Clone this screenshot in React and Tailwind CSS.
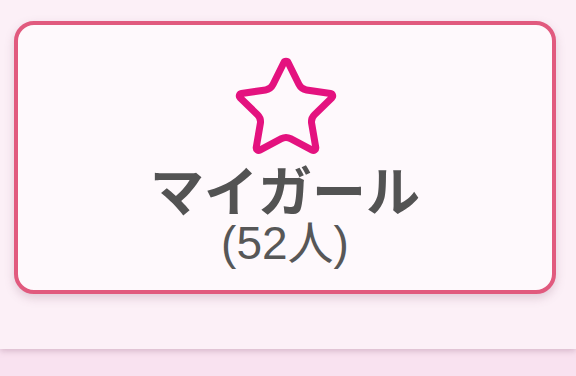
import React from 'react';

const StarOutline = () => (
  <svg width="112" height="112" viewBox="0 0 24 24" fill="none">
    <path
      d="M11.525 2.295a.53.53 0 0 1 .95 0l2.31 4.679a2.123 2.123 0 0 0 1.595 1.16l5.166.756a.53.53 0 0 1 .294.904l-3.736 3.638a2.123 2.123 0 0 0-.611 1.878l.882 5.14a.53.53 0 0 1-.771.56l-4.618-2.428a2.122 2.122 0 0 0-1.973 0L6.396 21.01a.53.53 0 0 1-.77-.56l.881-5.139a2.122 2.122 0 0 0-.611-1.879L2.16 9.795a.53.53 0 0 1 .294-.906l5.165-.755a2.122 2.122 0 0 0 1.597-1.16z"
      stroke="#e4127f"
      strokeWidth="1.5"
      strokeLinejoin="round"
    />
  </svg>
);

export default function App() {
  return (
    <div className="w-[576px] h-[376px] overflow-hidden bg-[#f9e2f0]" style={{ fontFamily: '"Liberation Sans", "Noto Sans CJK JP", sans-serif' }}>
      <div className="h-[349px] bg-[#fcf0f7] pt-[21px] pl-[14px] pr-[20px] shadow-[0_2px_6px_rgba(150,100,130,0.35)] relative">
        <div className="h-[273px] rounded-[20px] border-[4px] border-[#e15a7e] bg-[#fef9fc] shadow-[0_4px_10px_rgba(140,90,120,0.25)] flex flex-col items-center pt-[27px]">
          <div className="ml-[2px]">
            <StarOutline />
          </div>
          <div className="mt-[-1px] text-[54px] leading-[52px] font-bold text-[#535353]" style={{ fontFamily: '"Noto Sans CJK JP", sans-serif' }}>
            マイガール
          </div>
          <div className="mt-[5px] text-[46px] leading-[46px] text-[#575757]">
            (52人)
          </div>
        </div>
      </div>
    </div>
  );
}
